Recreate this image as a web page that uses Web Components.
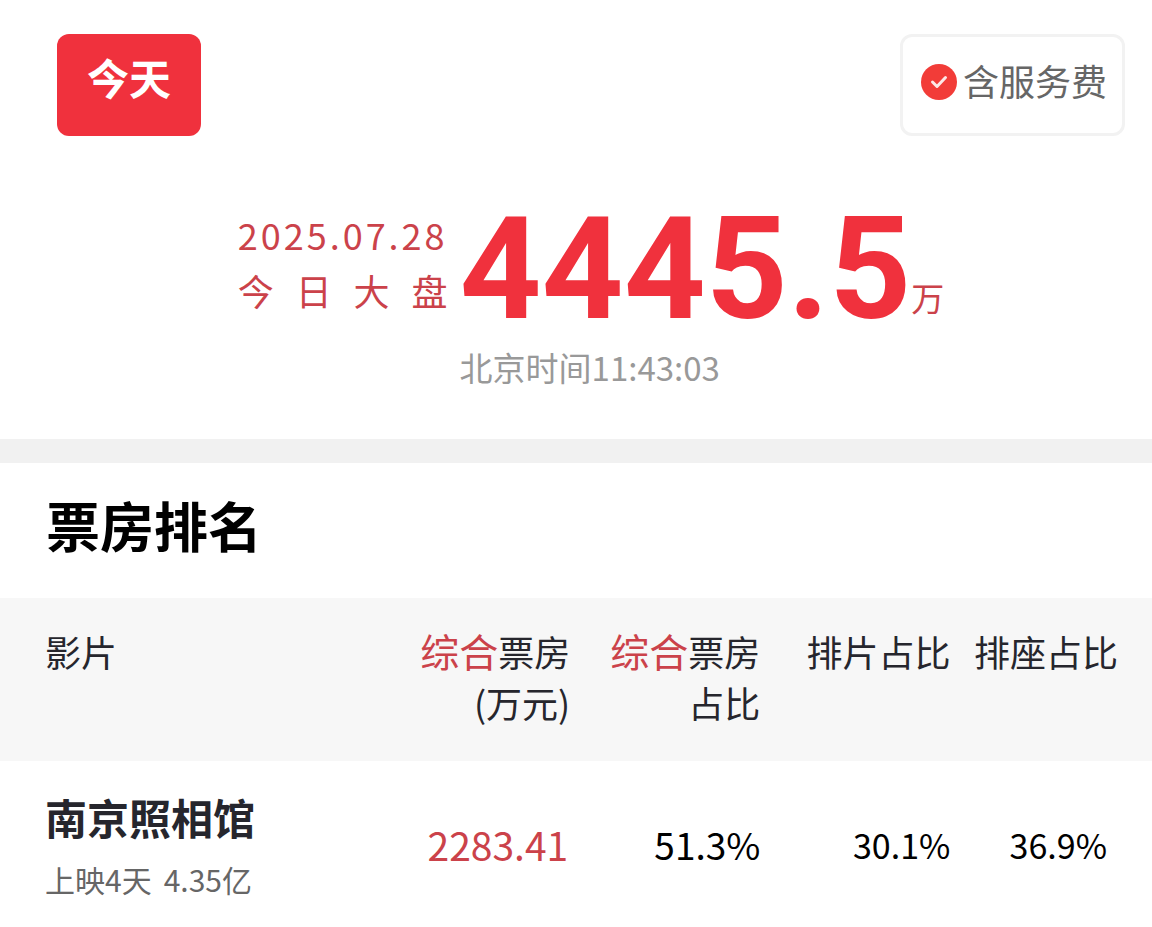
<!DOCTYPE html>
<html lang="zh-CN">
<head>
<meta charset="utf-8">
<meta name="viewport" content="width=device-width, initial-scale=1">
<title>票房排名</title>
<style>
  html { background: #fff; }
  body {
    margin: 0;
    font-family: "Noto Sans CJK SC", sans-serif;
    color: #26262d;
    --brand: #f0313d;
    --accent: #cb424a;
    --muted: #666;
  }
</style>
</head>
<body>
<box-office-page>
  <top-bar>
    <day-button>今天</day-button>
    <fee-toggle>含服务费</fee-toggle>
  </top-bar>
  <daily-total date="2025.07.28" label="今 日 大 盘" amount="4445.5" unit="万" time="北京时间11:43:03"></daily-total>
  <section-break></section-break>
  <section-title>票房排名</section-title>
  <ranking-table></ranking-table>
</box-office-page>

<script>
function attach(host, html) {
  const template = document.createElement('template');
  template.innerHTML = html;
  host.attachShadow({ mode: 'open' }).append(template.content.cloneNode(true));
  return host.shadowRoot;
}

customElements.define('box-office-page', class extends HTMLElement {
  constructor() {
    super();
    attach(this, `
      <style>
        :host { display: block; }
        main { display: flex; flex-direction: column; }
      </style>
      <main><slot></slot></main>`);
  }
});

customElements.define('top-bar', class extends HTMLElement {
  constructor() {
    super();
    attach(this, `
      <style>
        :host { display: flex; justify-content: space-between; padding: 34px 27px 0 57px; }
      </style>
      <slot></slot>`);
  }
});

customElements.define('day-button', class extends HTMLElement {
  constructor() {
    super();
    attach(this, `
      <style>
        :host { display: block; }
        button {
          display: block; margin: 0; padding: 13px 30px 29px; border: 0; border-radius: 12px;
          background: var(--brand); color: #fff;
          font: bold 42px/60px "Noto Sans CJK SC", sans-serif; cursor: pointer;
        }
      </style>
      <button type="button"><slot></slot></button>`);
  }
});

customElements.define('fee-toggle', class extends HTMLElement {
  constructor() {
    super();
    attach(this, `
      <style>
        :host { display: block; }
        label {
          display: flex; align-items: center; gap: 6px;
          padding: 16px 15px 26px 18px; border: 3px solid #f2f2f2; border-radius: 12px;
          font-size: 36px; line-height: 54px; color: var(--muted); cursor: pointer;
        }
        .box { display: grid; padding-top: 4px; }
        input, svg { grid-area: 1 / 1; width: 36px; height: 36px; margin: 0; }
        input { appearance: none; border-radius: 50%; background: #ccc; }
        input:checked { background: #f23c38; }
        svg { pointer-events: none; }
      </style>
      <label for="fee">
        <span class="box">
          <input id="fee" type="checkbox" checked>
          <svg viewBox="0 0 36 36" fill="none" stroke="#fde8e6" stroke-width="3" stroke-linecap="round" stroke-linejoin="round" aria-hidden="true"><path d="M11.5 18l4.5 4.5 8.5-9"/></svg>
        </span>
        <span><slot></slot></span>
      </label>`);
  }
});

customElements.define('daily-total', class extends HTMLElement {
  constructor() {
    super();
    const root = attach(this, `
      <style>
        :host { display: flex; justify-content: center; padding: 60px 0 48px 30px; }
        .grid { display: grid; grid-template-columns: auto auto auto; column-gap: 12px; }
        .caption { color: var(--accent); font-size: 36px; line-height: 56px; padding-top: 10px; }
        .caption p { margin: 0; }
        .date { letter-spacing: 3px; margin-right: -3px; }
        .label { text-align-last: justify; }
        .amount { color: var(--brand); font-family: Roboto, sans-serif; font-size: 143px; line-height: 147px; font-weight: bold; }
        .unit { color: var(--accent); font-size: 33px; line-height: 48px; align-self: end; margin-bottom: 22px; margin-left: -12px; }
        .time { grid-column: 2 / 4; color: #999; font-size: 33px; line-height: 48px; }
      </style>
      <div class="grid">
        <div class="caption"><p class="date"></p><p class="label"></p></div>
        <strong class="amount"></strong>
        <span class="unit"></span>
        <time class="time"></time>
      </div>`);
    for (const name of ['date', 'label', 'amount', 'unit', 'time']) {
      root.querySelector('.' + name).textContent = this.getAttribute(name);
    }
  }
});

customElements.define('section-break', class extends HTMLElement {
  constructor() {
    super();
    attach(this, `<style>:host { display: block; height: 24px; background: #f1f1f1; }</style>`);
  }
});

customElements.define('section-title', class extends HTMLElement {
  constructor() {
    super();
    attach(this, `
      <style>
        :host { display: block; padding: 22px 46px 33px; }
        h2 { margin: 0; color: #000; font-size: 54px; line-height: 80px; font-weight: bold; }
      </style>
      <h2><slot></slot></h2>`);
  }
});

const films = [
  { name: '南京照相馆', days: '上映4天', total: '4.35亿', gross: '2283.41', share: '51.3%', shows: '30.1%', seats: '36.9%' },
];

customElements.define('ranking-table', class extends HTMLElement {
  constructor() {
    super();
    const root = attach(this, `
      <style>
        :host { display: block; }
        table { width: 100%; border-collapse: collapse; table-layout: fixed; }
        .film { width: 33%; }
        .share, .shows, .gross { width: 16.5%; }
        th, td { padding: 0; text-align: right; white-space: nowrap; }
        thead { background: #f7f7f7; }
        thead th { padding: 28px 0 33px; font-size: 36px; line-height: 51px; font-weight: normal; vertical-align: top; }
        thead em { font-style: normal; font-size: 39px; line-height: 1; color: var(--accent); }
        th:first-child { text-align: left; padding-left: 45px; }
        thead th:last-child { padding-right: 34px; }
        tbody th, tbody td { padding-top: 26px; padding-bottom: 16px; }
        tbody td:last-child { padding-right: 45px; }
        .name { display: block; font-size: 42px; line-height: 60px; font-weight: bold; }
        .meta { display: flex; gap: 12px; margin-top: 10px; font-size: 30px; line-height: 44px; font-weight: normal; color: var(--muted); }
        td { color: #000; font-size: 34px; }
        td.major { font-size: 37px; }
        td.red { color: var(--accent); font-size: 39px; padding-right: 2px; }
      </style>
      <table>
        <colgroup><col class="film"><col class="gross"><col class="share"><col class="shows"><col></colgroup>
        <thead>
          <tr>
            <th scope="col">影片</th>
            <th scope="col"><em>综合</em>票房<br>(万元)</th>
            <th scope="col"><em>综合</em>票房<br>占比</th>
            <th scope="col">排片占比</th>
            <th scope="col">排座占比</th>
          </tr>
        </thead>
        <tbody></tbody>
      </table>`);
    root.querySelector('tbody').innerHTML = films.map(f => `
      <tr>
        <th scope="row"><span class="name">${f.name}</span><span class="meta"><span>${f.days}</span><span>${f.total}</span></span></th>
        <td class="red">${f.gross}</td>
        <td class="major">${f.share}</td>
        <td>${f.shows}</td>
        <td>${f.seats}</td>
      </tr>`).join('');
  }
});
</script>
</body>
</html>
